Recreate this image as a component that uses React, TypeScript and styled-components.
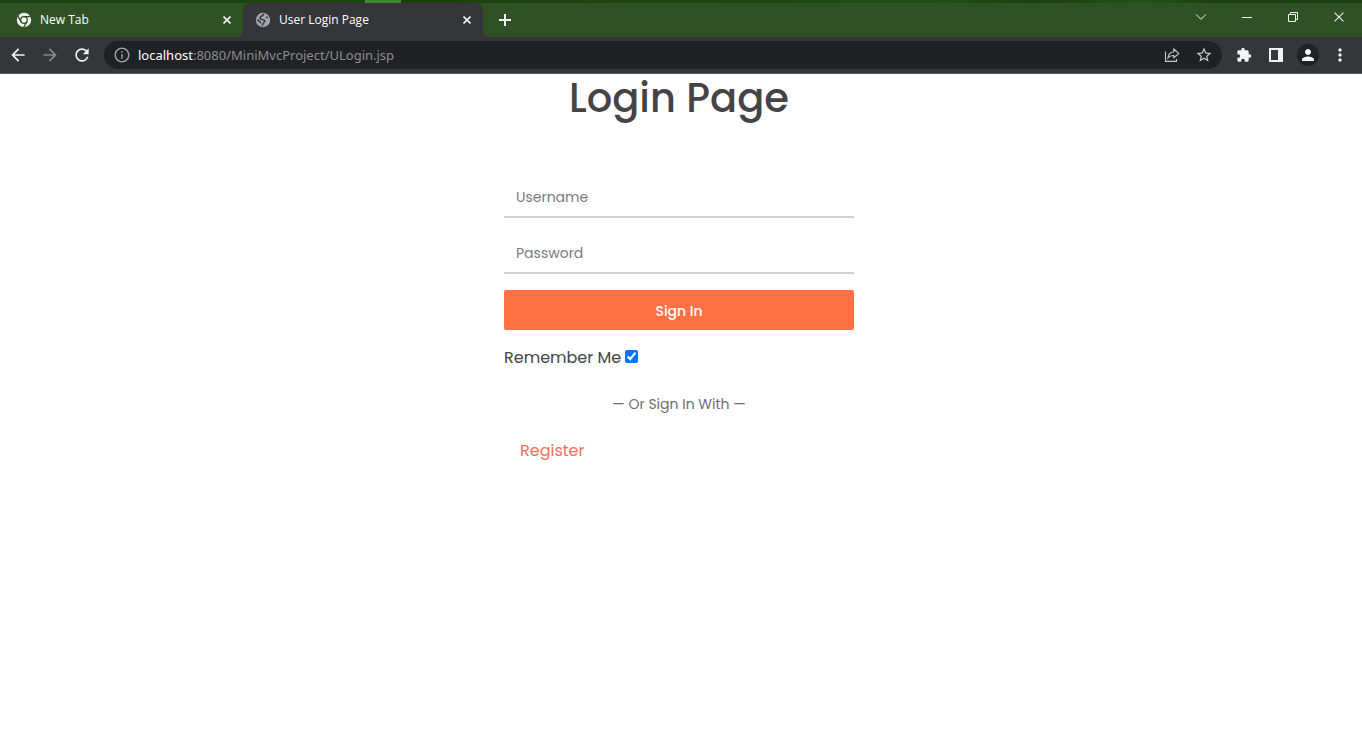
import React from 'react';
import styled, { createGlobalStyle } from 'styled-components';
import { MdArrowBack, MdArrowForward, MdRefresh, MdExtension, MdStarBorder, MdMoreVert, MdPerson, MdInfoOutline } from 'react-icons/md';

const GlobalStyle = createGlobalStyle`
  *, *::before, *::after { box-sizing: border-box; }
  body { margin: 0; background: #fff; }
  button, input { font-family: inherit; }
  svg { display: block; flex: none; }
`;

const BrowserWindow = styled.div`
  display: flex;
  flex-direction: column;
  min-height: 100vh;
`;

const Chrome = styled.header`
  font-family: 'Open Sans', 'Noto Sans', sans-serif;
  background: #35363a;
  border-bottom: 1px solid #5b5c60;
`;

const DesktopEdge = styled.div`
  height: 3px;
  background: linear-gradient(to right, #1d4310 0 365px, #3b8a27 365px 401px, #1b4010 401px, #1e4d10 70%, #1b4010 76%, #205214 84%, #1a3e11 90%);
`;

const TabStrip = styled.div`
  display: flex;
  height: 34px;
  background: #305126;
`;

const Tab = styled.div<{ $active?: boolean }>`
  position: relative;
  display: flex;
  align-items: center;
  gap: 8px;
  width: ${p => (p.$active ? '240px' : '243px')};
  padding: 0 8px 0 ${p => (p.$active ? '12px' : '16px')};
  border-radius: 8px 8px 0 0;
  background: ${p => (p.$active ? '#35363a' : 'transparent')};
  color: ${p => (p.$active ? '#a3a6ab' : '#e9ede8')};

  &::before, &::after {
    content: '';
    display: ${p => (p.$active ? 'block' : 'none')};
    position: absolute;
    bottom: 0;
    width: 6px;
    height: 6px;
  }
  &::before {
    right: 100%;
    background: radial-gradient(circle at 0 0, transparent 6px, #35363a 6px);
  }
  &::after {
    left: 100%;
    background: radial-gradient(circle at 100% 0, transparent 6px, #35363a 6px);
  }
`;

const TabTitle = styled.button`
  flex: 1;
  padding: 0;
  border: 0;
  background: none;
  color: #fff;
  font-size: 12px;
  line-height: 16px;
  text-align: left;
`;

const IconButton = styled.button<{ $size?: number; $dim?: boolean }>`
  display: grid;
  place-items: center;
  flex: none;
  width: ${p => p.$size ?? 32}px;
  height: ${p => Math.min(p.$size ?? 28, 28)}px;
  padding: 0;
  border: 0;
  background: none;
  color: ${p => (p.$dim ? '#87888b' : '#f1f3f4')};
`;

const AddressAction = styled(IconButton)`
  color: #c6c8cc;
`;

const NewTabButton = styled(IconButton)`
  align-self: center;
  margin-left: 8px;
`;

const WindowControls = styled.div`
  display: flex;
  margin-left: auto;
`;

const Toolbar = styled.div`
  display: flex;
  align-items: center;
  height: 36px;
  padding: 0 6px 0 2px;
`;

const AddressBar = styled.div`
  display: flex;
  align-items: center;
  flex: 1;
  height: 28px;
  margin: 0 6px;
  padding: 0 2px 0 9px;
  border-radius: 14px;
  background: #202124;
  color: #9aa0a6;
`;

const Address = styled.div`
  flex: 1;
  padding-left: 7px;
  color: #8d8f93;
  font-family: 'Noto Sans', 'Open Sans', sans-serif;
  font-size: 13px;
  line-height: 20px;
`;

const Host = styled.span`
  color: #fff;
`;

const Avatar = styled.span`
  display: grid;
  place-items: center;
  width: 22px;
  height: 22px;
  border-radius: 50%;
  background: #202124;
`;

const Page = styled.main`
  display: flex;
  flex-direction: column;
  align-items: center;
  flex: 1;
  padding-right: 4px;
  color: #444446;
  font-family: Poppins, Inter, sans-serif;
`;

const Title = styled.h1`
  margin: 0 0 56px;
  font-size: 40px;
  font-weight: 500;
  line-height: 48px;
`;

const LoginForm = styled.form`
  display: flex;
  flex-direction: column;
  gap: 16px;
  width: 350px;
  max-width: 100%;
`;

const TextField = styled.input`
  width: 100%;
  height: 40px;
  padding: 0 12px;
  border: 0;
  border-bottom: 2px solid #ced0d4;
  border-radius: 0;
  outline: 0;
  color: #404041;
  font-size: 14px;

  &::placeholder { color: #757b81; opacity: 1; }
`;

const SubmitButton = styled.button`
  height: 40px;
  padding: 2px 0 0;
  border: 0;
  border-radius: 2px;
  background: #ff7043;
  color: #fff;
  font-size: 14px;
  font-weight: 500;
`;

const Remember = styled.label`
  display: flex;
  align-items: baseline;
  gap: 4px;
  font-size: 16px;
  line-height: 24px;
`;

const CheckBox = styled.input`
  width: 13px;
  height: 13px;
  margin: 0;
  accent-color: #0075ff;
`;

const Divider = styled.p`
  margin: 8px 0 0;
  color: #6c6e70;
  font-size: 14px;
  line-height: 21px;
  text-align: center;
`;

const RegisterLink = styled.a`
  align-self: flex-start;
  margin: 8px 16px 0;
  color: #f0715a;
  font-size: 16px;
  line-height: 24px;
  text-decoration: none;
`;

const ChromeLogo = () => (
  <svg width="16" height="16" viewBox="0 0 16 16" aria-hidden="true">
    <circle cx="8" cy="8" r="7.2" fill="#f1f4f0" />
    <g fill="none" stroke="#305126" strokeWidth="1.3">
      <circle cx="8" cy="8" r="3.300" />
      <path d="M8 4.700H15M5.140 9.650L1.640 3.600M10.860 9.650L7.400 15.700" />
    </g>
  </svg>
);

const GlobeIcon = () => (
  <svg width="16" height="16" viewBox="0 0 16 16" aria-hidden="true">
    <circle cx="8" cy="8" r="7.200" fill="currentColor" />
    <path
      d="M9.200 2.300C7.300 2.600 7.600 4 6.200 4.500 4.900 5 4.600 6.600 6 7.300c1.500.7 3.400 0 3.800 1.500.3 1.300-1.600 1.500-1.700 2.700-.1 1-.6 1.700-1.300 2.300M2.200 7.600l2.600 2.100 1 1.700M12.900 5.200l-2 .4"
      fill="none" stroke="#35363a" strokeWidth="1.500"
    />
  </svg>
);

const CrossIcon = ({ size = 8, weight = 2 }: { size?: number; weight?: number }) => (
  <svg width={size} height={size} viewBox="0 0 10 10" fill="none" stroke="currentColor" strokeWidth={weight} aria-hidden="true">
    <path d="M.6.6l8.800 8.800M9.400.6L.6 9.400" />
  </svg>
);

const PlusIcon = () => (
  <svg width="12" height="12" viewBox="0 0 12 12" stroke="currentColor" strokeWidth="2" aria-hidden="true">
    <path d="M6 0v12M0 6h12" />
  </svg>
);

const ChevronIcon = () => (
  <svg width="12" height="8" viewBox="0 0 12 8" fill="none" stroke="currentColor" aria-hidden="true">
    <path d="M1 1.300l5 5 5-5" />
  </svg>
);

const MinimizeIcon = () => (
  <svg width="10" height="2" viewBox="0 0 10 2" aria-hidden="true">
    <path d="M0 1h10v1H0z" fill="currentColor" />
  </svg>
);

const RestoreIcon = () => (
  <svg width="10" height="10" viewBox="0 0 10 10" fill="none" stroke="currentColor" aria-hidden="true">
    <path d="M.5 2.500h7v7h-7zM2.500 2.500v-2h7v7h-2" />
  </svg>
);

const ShareIcon = () => (
  <svg width="16" height="16" viewBox="0 0 16 16" fill="none" stroke="currentColor" strokeWidth="1.100" aria-hidden="true">
    <path d="M1.500 4.500v9.900h11v-2.500M9.800 2l5 4.500-5 4.400V8.500C7 8.400 5.200 9.200 3.900 11c.3-3.400 2.300-5.800 5.900-6.300z" />
  </svg>
);

const SidePanelIcon = () => (
  <svg width="14" height="14" viewBox="0 0 14 14" aria-hidden="true">
    <path d="M0 0h14v14H0zM2 2v10h7V2z" fill="currentColor" fillRule="evenodd" />
  </svg>
);

export default function App() {
  return (
    <BrowserWindow>
      <GlobalStyle />
      <Chrome>
        <DesktopEdge />
        <TabStrip>
          <Tab>
            <ChromeLogo />
            <TabTitle>New Tab</TabTitle>
            <IconButton $size={16} aria-label="Close New Tab"><CrossIcon /></IconButton>
          </Tab>
          <Tab $active>
            <GlobeIcon />
            <TabTitle>User Login Page</TabTitle>
            <IconButton $size={16} aria-label="Close User Login Page"><CrossIcon /></IconButton>
          </Tab>
          <NewTabButton $size={28} aria-label="New tab"><PlusIcon /></NewTabButton>
          <WindowControls>
            <IconButton $size={46} aria-label="Search tabs"><ChevronIcon /></IconButton>
            <IconButton $size={46} aria-label="Minimize"><MinimizeIcon /></IconButton>
            <IconButton $size={46} aria-label="Restore"><RestoreIcon /></IconButton>
            <IconButton $size={46} aria-label="Close window"><CrossIcon size={10} weight={1.1} /></IconButton>
          </WindowControls>
        </TabStrip>
        <Toolbar>
          <IconButton aria-label="Back"><MdArrowBack size={20} /></IconButton>
          <IconButton $dim aria-label="Forward"><MdArrowForward size={20} /></IconButton>
          <IconButton aria-label="Reload"><MdRefresh size={20} /></IconButton>
          <AddressBar>
            <MdInfoOutline size={18} />
            <Address role="textbox" aria-label="Address"><Host>localhost</Host>:8080/MiniMvcProject/ULogin.jsp</Address>
            <AddressAction aria-label="Share"><ShareIcon /></AddressAction>
            <AddressAction aria-label="Bookmark"><MdStarBorder size={18} /></AddressAction>
          </AddressBar>
          <IconButton aria-label="Extensions"><MdExtension size={16} /></IconButton>
          <IconButton aria-label="Side panel"><SidePanelIcon /></IconButton>
          <IconButton aria-label="Profile"><Avatar><MdPerson size={18} /></Avatar></IconButton>
          <IconButton aria-label="Menu"><MdMoreVert size={20} /></IconButton>
        </Toolbar>
      </Chrome>
      <Page>
        <Title>Login Page</Title>
        <LoginForm onSubmit={e => e.preventDefault()}>
          <TextField type="text" placeholder="Username" aria-label="Username" />
          <TextField type="password" placeholder="Password" aria-label="Password" />
          <SubmitButton type="submit">Sign In</SubmitButton>
          <Remember>Remember Me <CheckBox type="checkbox" defaultChecked /></Remember>
          <Divider>— Or Sign In With —</Divider>
          <RegisterLink href="#register">Register</RegisterLink>
        </LoginForm>
      </Page>
    </BrowserWindow>
  );
}
